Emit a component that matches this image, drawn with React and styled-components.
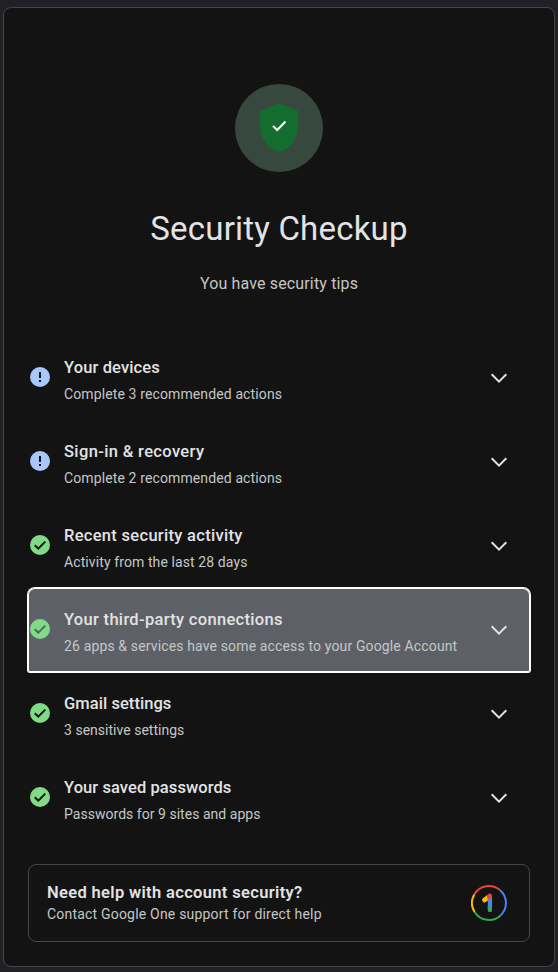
import React from 'react';
import styled, { createGlobalStyle, ThemeProvider } from 'styled-components';

const theme = {
  colors: {
    page: '#202124',
    surface: '#131314',
    border: '#444746',
    text: '#e3e3e3',
    textSecondary: '#c4c7c5',
    success: '#80da88',
    info: '#a8c7fa',
    highlight: '#5d6067',
    focus: '#ffffff',
  },
  fonts: {
    main: "'Google Sans', 'Google Sans Text', Roboto, 'Liberation Sans', sans-serif",
    support: "Roboto, 'Liberation Sans', sans-serif",
  },
};

const GlobalStyle = createGlobalStyle`
  * {
    box-sizing: border-box;
  }

  body {
    margin: 0;
    background-color: ${props => props.theme.colors.page};
    font-family: ${props => props.theme.fonts.main};
  }

  h1, h2, h3, p {
    margin: 0;
    font-weight: 400;
  }
`;

const Page = styled.div`
  height: 972px;
  padding: 7px 3px 5px;
  overflow: hidden;
`;

const Panel = styled.main`
  height: 960px;
  padding: 76px 24px 0;
  background-color: ${props => props.theme.colors.surface};
  border: 1px solid ${props => props.theme.colors.border};
  border-radius: 8px;
`;

const Header = styled.header`
  display: flex;
  flex-direction: column;
  align-items: center;
  height: 252px;
  text-align: center;
`;

const Badge = styled.div`
  width: 88px;
  height: 88px;
  border-radius: 50%;
  background-color: #37493f;

  svg {
    display: block;
  }
`;

const Title = styled.h1`
  margin-top: 37px;
  font-size: 33px;
  line-height: 40px;
  letter-spacing: 0.2px;
  white-space: nowrap;
  color: ${props => props.theme.colors.text};
`;

const Subtitle = styled.p`
  margin-top: 23px;
  font-size: 16px;
  line-height: 24px;
  letter-spacing: 0.15px;
  color: ${props => props.theme.colors.textSecondary};
`;

const List = styled.div`
  display: flex;
  flex-direction: column;
`;

const Row = styled.div`
  display: flex;
  align-items: flex-start;
  height: 84px;
  padding: 19px 19px 0 0;
  cursor: pointer;
  border-radius: 7px 7px 2px 2px;
  background-color: ${props => props.$focused ? props.theme.colors.highlight : 'transparent'};
  box-shadow: ${props => props.$focused
    ? `0 0 0 1px ${props.theme.colors.focus}, inset 0 0 0 1px ${props.theme.colors.focus}`
    : 'none'};

  .status-icon {
    flex-shrink: 0;
    margin: 10px 12px 0 0;
  }

  .chevron {
    flex-shrink: 0;
    margin-top: 11px;
  }
`;

const RowText = styled.div`
  flex: 1;
  padding-top: 1px;
  white-space: nowrap;
`;

const RowTitle = styled.h2`
  font-size: 16.5px;
  font-weight: 500;
  line-height: 24px;
  letter-spacing: ${props => props.$tracking}px;
  color: ${props => props.theme.colors.text};
`;

const RowDetail = styled.p`
  margin-top: 4px;
  font-size: 14px;
  line-height: 20px;
  letter-spacing: ${props => props.$tracking}px;
  color: ${props => props.theme.colors.textSecondary};
`;

const SupportCard = styled.div`
  display: flex;
  align-items: center;
  justify-content: space-between;
  height: 78px;
  margin-top: 24px;
  padding: 0 22px 0 18px;
  border: 1px solid ${props => props.theme.colors.border};
  border-radius: 8px;
`;

const SupportText = styled.div`
  padding-bottom: 1px;
`;

const SupportTitle = styled.h3`
  font-size: 16.5px;
  font-weight: 600;
  line-height: 23px;
  letter-spacing: 0.34px;
  color: ${props => props.theme.colors.text};
`;

const SupportDetail = styled.p`
  font-family: ${props => props.theme.fonts.support};
  font-size: 14px;
  line-height: 20px;
  letter-spacing: 0.2px;
  color: ${props => props.theme.colors.textSecondary};
`;

const ShieldIcon = () => (
  <svg width="88" height="88" viewBox="0 0 88 88">
    <path
      d="M44 19.6 L61.5 26 Q63 26.6 63 28.2 V42 C63 54.5 55.5 64 45 67.6 Q44 68 43 67.6 C32.5 64 25 54.5 25 42 V28.2 Q25 26.6 26.5 26 Z"
      fill="#146c2e"
    />
    <path d="M38 42 L42.2 46 L50.5 37.5" fill="none" stroke="#fff" strokeWidth="2" />
  </svg>
);

const CheckIcon = ({ color }) => (
  <svg className="status-icon" width="24" height="24" viewBox="0 0 24 24">
    <circle cx="12" cy="12" r="10" fill={theme.colors.success} />
    <path d="M6.7 12.2 L10.3 15.6 L17.3 8.6" fill="none" stroke={color} strokeWidth="2" />
  </svg>
);

const InfoIcon = () => (
  <svg className="status-icon" width="24" height="24" viewBox="0 0 24 24">
    <circle cx="12" cy="12" r="10" fill={theme.colors.info} />
    <path d="M11 7h2v6h-2zM11 15h2v2h-2z" fill={theme.colors.surface} />
  </svg>
);

const ChevronIcon = () => (
  <svg className="chevron" width="24" height="24" viewBox="0 0 24 24">
    <path d="M4.7 8.3 L12 15.6 L19.3 8.3" fill="none" stroke={theme.colors.text} strokeWidth="2" />
  </svg>
);

const GoogleOneLogo = () => (
  <svg width="36" height="36" viewBox="0 0 36 36" fill="none">
    <g strokeWidth="2">
      <path d="M3.3 9.5 A17 17 0 0 1 28.9 5" stroke="#ea4335" />
      <path d="M28.9 5 A17 17 0 0 1 29.8 30.2" stroke="#4285f4" />
      <path d="M29.8 30.2 A17 17 0 0 1 3.6 27" stroke="#34a853" />
      <path d="M3.6 27 A17 17 0 0 1 3.3 9.5" stroke="#fbbc04" />
    </g>
    <path d="M16.8 12 V25 A2.1 2.1 0 0 0 21 25 V12 Z" fill="#4285f4" />
    <path d="M16.8 20.8 L21 23.2 V25 A2.1 2.1 0 0 1 16.8 25 Z" fill="#34a853" />
    <path d="M16 10.2 L12.1 13 A2.3 2.3 0 0 0 14.7 16.9 L18 14.8 Z" fill="#fbbc04" />
    <path d="M15.8 10.3 L18 8.7 C19.3 7.9 21 8.8 21 10.4 V12 L16.9 15.8 Z" fill="#ea4335" />
  </svg>
);

const sections = [
  { id: 'devices', title: 'Your devices', detail: 'Complete 3 recommended actions', status: 'info', tracking: [0.13, 0.12] },
  { id: 'recovery', title: 'Sign-in & recovery', detail: 'Complete 2 recommended actions', status: 'info', tracking: [0.36, 0.12] },
  { id: 'activity', title: 'Recent security activity', detail: 'Activity from the last 28 days', status: 'ok', tracking: [0.3, 0.1] },
  { id: 'connections', title: 'Your third-party connections', detail: '26 apps & services have some access to your Google Account', status: 'ok', tracking: [0.31, 0.14] },
  { id: 'gmail', title: 'Gmail settings', detail: '3 sensitive settings', status: 'ok', tracking: [0.06, 0.02] },
  { id: 'passwords', title: 'Your saved passwords', detail: 'Passwords for 9 sites and apps', status: 'ok', tracking: [0.08, 0.03] },
];

const App = () => {
  const focusedId = 'connections';

  return (
    <ThemeProvider theme={theme}>
      <GlobalStyle />
      <Page>
        <Panel>
          <Header>
            <Badge>
              <ShieldIcon />
            </Badge>
            <Title>Security Checkup</Title>
            <Subtitle>You have security tips</Subtitle>
          </Header>

          <List>
            {sections.map(item => (
              <Row key={item.id} $focused={item.id === focusedId}>
                {item.status === 'info' ? (
                  <InfoIcon />
                ) : (
                  <CheckIcon color={item.id === focusedId ? theme.colors.highlight : theme.colors.surface} />
                )}
                <RowText>
                  <RowTitle $tracking={item.tracking[0]}>{item.title}</RowTitle>
                  <RowDetail $tracking={item.tracking[1]}>{item.detail}</RowDetail>
                </RowText>
                <ChevronIcon />
              </Row>
            ))}
          </List>

          <SupportCard>
            <SupportText>
              <SupportTitle>Need help with account security?</SupportTitle>
              <SupportDetail>Contact Google One support for direct help</SupportDetail>
            </SupportText>
            <GoogleOneLogo />
          </SupportCard>
        </Panel>
      </Page>
    </ThemeProvider>
  );
};

export default App;
